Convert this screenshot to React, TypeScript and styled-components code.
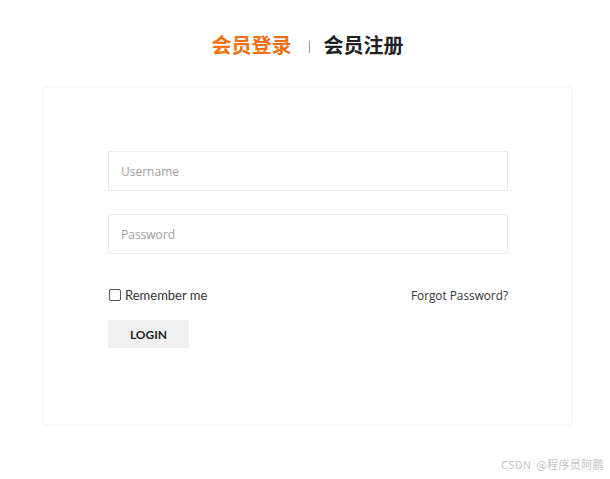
import React from "react";
import styled, { createGlobalStyle } from "styled-components";

const Global = createGlobalStyle`
  html, body { margin: 0; padding: 0; background: #fff; }
  body { font-family: "Open Sans", "Noto Sans CJK SC", sans-serif; width: 610px; height: 479px; overflow: hidden; position: relative; }
`;

const Page = styled.div`
  display: flex;
  flex-direction: column;
  align-items: center;
  padding: 31px 0 0 5px;
`;

const Tabs = styled.div`
  display: flex;
  align-items: center;
  height: 28px;
  font-family: "Noto Sans CJK SC", sans-serif;
  font-size: 20px;
  font-weight: 700;
`;

const Tab = styled.span<{ $active?: boolean }>`
  color: ${(p) => (p.$active ? "#f36f13" : "#222")};
  line-height: 28px;
`;

const Sep = styled.span`
  display: block;
  width: 1px;
  height: 12px;
  background: #999;
  margin: 3px 14px 0 17px;
`;

const Card = styled.div`
  margin-top: 29px;
  width: 527px;
  height: 336px;
  box-sizing: border-box;
  padding: 63px 63px 0 64px;
  background: #fff;
  box-shadow: 0 0 4px rgba(0, 0, 0, 0.1);
  display: flex;
  flex-direction: column;
`;

const Input = styled.input`
  box-sizing: border-box;
  width: 400px;
  height: 40px;
  border: 1px solid #ececec;
  padding: 0 12px;
  font-family: "Open Sans", sans-serif;
  font-size: 12px;
  color: #333;
  outline: none;
  margin-bottom: 23px;
  &::placeholder { color: #a0a0a0; }
`;

const Row = styled.div`
  display: flex;
  justify-content: space-between;
  align-items: center;
  margin-top: 9px;
  height: 18px;
`;

const Remember = styled.label`
  display: flex;
  align-items: center;
  font-family: "Lato", sans-serif;
  font-size: 13px;
  color: #333;
  gap: 4px;
`;

const Box = styled.span`
  display: inline-block;
  box-sizing: border-box;
  width: 12px;
  height: 12px;
  border: 1px solid #555;
  border-radius: 2px;
  margin-left: 1px;
`;

const Forgot = styled.a`
  font-family: "Open Sans", sans-serif;
  font-size: 11.8px;
  color: #333;
  text-decoration: none;
`;

const Button = styled.button`
  margin-top: 16px;
  width: 81px;
  height: 28px;
  border: none;
  background: #f0f0f0;
  font-family: "Lato", sans-serif;
  font-weight: 700;
  font-size: 12px;
  color: #222;
  padding: 0;
`;

const Watermark = styled.div`
  position: absolute;
  right: 6px;
  bottom: 7px;
  font-family: "Noto Sans CJK SC", sans-serif;
  font-size: 11px;
  color: #c4c4c4;
  letter-spacing: 0.4px;
  word-spacing: 2px;
`;

export default function App() {
  return (
    <>
      <Global />
      <Page>
        <Tabs>
          <Tab $active>会员登录</Tab>
          <Sep />
          <Tab>会员注册</Tab>
        </Tabs>
        <Card>
          <Input placeholder="Username" />
          <Input placeholder="Password" type="password" />
          <Row>
            <Remember>
              <Box />
              Remember me
            </Remember>
            <Forgot href="#">Forgot Password?</Forgot>
          </Row>
          <div>
            <Button>LOGIN</Button>
          </div>
        </Card>
      </Page>
      <Watermark>CSDN @程序员阿鹏</Watermark>
    </>
  );
}
